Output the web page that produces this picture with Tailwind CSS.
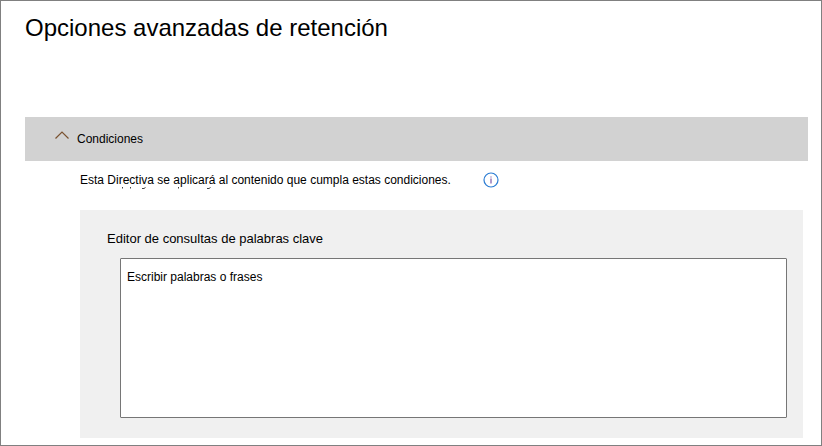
<!DOCTYPE html>
<html lang="es">
<head>
<meta charset="utf-8">
<meta name="viewport" content="width=device-width, initial-scale=1">
<title>Opciones avanzadas de retención</title>
<script src="https://cdn.jsdelivr.net/npm/@tailwindcss/browser@4"></script>
</head>
<body class="bg-white">
<main class="min-h-screen border border-[#808080] pl-6 pr-[13px] pt-[11px] pb-[7px] font-['Liberation_Sans',Arial,sans-serif] text-xs text-black">
  <h1 class="text-2xl leading-8">Opciones avanzadas de retención</h1>
  <section class="mt-[73px]">
    <h2>
      <button type="button" aria-expanded="true" aria-controls="condiciones" class="flex h-11 w-full items-center gap-2 bg-[#d2d2d2] pl-[30px] text-left">
        <svg class="mb-2 h-2 w-3.5" viewBox="0 0 14 8" fill="none" stroke="#7a5230" stroke-width="1.2" aria-hidden="true"><path d="M.5 7.5 7 1l6.500 6.500"/></svg>
        <span>Condiciones</span>
      </button>
    </h2>
    <div id="condiciones" class="pl-[55px] pr-[5px]">
      <div class="relative flex h-[49px] items-start gap-8 pt-[11px]">
        <p class="leading-4">Esta Directiva se aplicará al contenido que cumpla estas condiciones.</p>
        <button type="button" aria-label="Información">
          <svg class="size-4" viewBox="0 0 16 16" fill="none" aria-hidden="true"><circle cx="8" cy="8" r="7" stroke="#2b7cd3" stroke-width="1.200"/><path d="M8 6.500V11.500M8 4.500V5.500" stroke="#8f70b4" stroke-width="1.400"/></svg>
        </button>
        <svg class="absolute left-10 top-[26px] h-0.5 w-24" viewBox="0 0 96 2" stroke="#444" stroke-width="1" aria-hidden="true"><path d="M2.500 0v1.500M10.500 0v1.500M22 1.500h2l1.500-1M58.500 0v1.500M87 1.500h2l1.500-1" fill="none"/></svg>
      </div>
      <div class="bg-[#f0f0f0] pl-10 pr-4 pt-[21px] pb-5">
        <label for="consulta" class="-ml-[13px] block text-[13px] leading-4">Editor de consultas de palabras clave</label>
        <textarea id="consulta" placeholder="Escribir palabras o frases" class="mt-[11px] block h-40 w-full resize-none rounded-[1px] border border-[#767676] bg-white px-1.5 py-2.5 leading-4 placeholder:text-black outline-none"></textarea>
      </div>
    </div>
  </section>
</main>
</body>
</html>
